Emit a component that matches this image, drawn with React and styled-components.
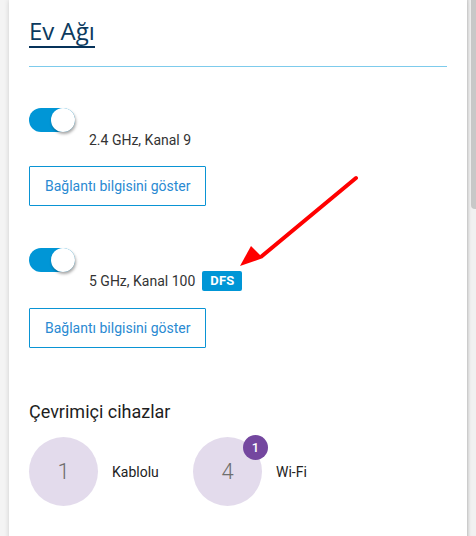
import React from "react";
import styled, { createGlobalStyle } from "styled-components";

const GlobalStyle = createGlobalStyle`
  html, body {
    margin: 0;
    padding: 0;
    height: 100%;
    overflow: hidden;
  }
  body {
    font-family: Roboto, "Liberation Sans", Arial, sans-serif;
    background: #f4f4f4;
  }
`;

const Frame = styled.div`
  display: flex;
  height: 536px;
  overflow: hidden;
  background: #f4f4f4;
`;

const Page = styled.div`
  position: relative;
  flex: 1;
  padding-left: 9px;
`;

const Rail = styled.div`
  flex: none;
  width: 9px;
  background: #f1f1f1;
  box-shadow: inset 3px 0 3px -2px rgba(0, 0, 0, 0.14);
  padding-left: 4px;
  box-sizing: border-box;
`;

const Thumb = styled.div`
  height: 209px;
  background: #c8c8c8;
  border-radius: 0 0 0 4px;
`;

const Card = styled.section`
  background: #fff;
  min-height: 1360px;
  padding: 15px 20px 20px;
  box-shadow: 0 0 5px rgba(0, 0, 0, 0.16);
`;

const Title = styled.h1`
  display: inline-block;
  margin: 0;
  font-family: "Open Sans", Roboto, sans-serif;
  font-weight: 400;
  font-size: 24px;
  line-height: 31px;
  color: #0b3a5e;
  border-bottom: 2px solid #07335a;
`;

const Divider = styled.hr`
  margin: 18px 0 0;
  border: 0;
  height: 1px;
  background: #7dcbec;
`;

const Band = styled.div`
  margin-top: 41px;
  & + & {
    margin-top: 42px;
  }
`;

const Switch = styled.span`
  position: relative;
  display: block;
  width: 46px;
  height: 24px;
  border-radius: 12px;
  background: ${(p) => (p.on ? "#0096d6" : "#bdbdbd")};

  &::after {
    content: "";
    position: absolute;
    top: 0;
    left: ${(p) => (p.on ? "22px" : "0")};
    width: 24px;
    height: 24px;
    border-radius: 50%;
    background: #fff;
    box-shadow: 1px 2px 3px rgba(0, 0, 0, 0.35);
  }
`;

const BandLabel = styled.div`
  display: flex;
  align-items: center;
  gap: 7px;
  margin-top: -1px;
  padding-left: 60px;
  font-size: 14px;
  line-height: 18px;
  color: #333;
`;

const Tag = styled.span`
  display: inline-block;
  padding: 0 8px;
  height: 20px;
  line-height: 20px;
  border-radius: 2px;
  background: #0096d6;
  color: #fff;
  font-weight: 700;
  font-size: 13px;
  letter-spacing: 0.2px;
`;

const OutlineButton = styled.button`
  display: block;
  margin-top: 17px;
  height: 40px;
  padding: 0 15px;
  background: #fff;
  border: 1px solid #0a94d4;
  border-radius: 1px;
  font-family: Roboto, sans-serif;
  font-size: 14px;
  color: #2a8ad2;
  cursor: pointer;
`;

const SectionTitle = styled.h2`
  margin: 52px 0 0;
  font-weight: 400;
  font-size: 18px;
  line-height: 24px;
  color: #1e1e1e;
`;

const Devices = styled.div`
  display: flex;
  margin-top: 13px;
`;

const Device = styled.div`
  display: flex;
  align-items: center;
  gap: 14px;
  width: 164px;
  font-size: 14px;
  color: #222;
`;

const Bubble = styled.div`
  position: relative;
  flex: none;
  width: 69px;
  height: 69px;
  border-radius: 50%;
  background: #e3dbec;
  display: flex;
  align-items: center;
  justify-content: center;
  font-size: 22px;
  font-weight: 300;
  color: #6e6e6e;
`;

const Count = styled.span`
  position: absolute;
  top: -2px;
  right: -6px;
  width: 25px;
  height: 25px;
  border-radius: 50%;
  background: #74479f;
  color: #fff;
  font-size: 13px;
  font-weight: 500;
  display: flex;
  align-items: center;
  justify-content: center;
`;

const Pointer = styled.svg`
  position: absolute;
  left: 240px;
  top: 170px;
  pointer-events: none;
`;

function WifiBand({ label, tag }) {
  return (
    <Band>
      <Switch on />
      <BandLabel>
        {label}
        {tag && <Tag>{tag}</Tag>}
      </BandLabel>
      <OutlineButton>Bağlantı bilgisini göster</OutlineButton>
    </Band>
  );
}

export default function App() {
  return (
    <>
      <GlobalStyle />
      <Frame>
        <Page>
          <Card>
            <Title>Ev Ağı</Title>
            <Divider />
            <WifiBand label="2.4 GHz, Kanal 9" />
            <WifiBand label="5 GHz, Kanal 100" tag="DFS" />
            <SectionTitle>Çevrimiçi cihazlar</SectionTitle>
            <Devices>
              <Device>
                <Bubble>1</Bubble>
                Kablolu
              </Device>
              <Device>
                <Bubble>
                  4<Count>1</Count>
                </Bubble>
                Wi-Fi
              </Device>
            </Devices>
          </Card>
          <Pointer width="130" height="110" viewBox="0 0 130 110">
            <line x1="116" y1="8" x2="22" y2="86" stroke="#ff0000" strokeWidth="4" strokeLinecap="round" />
            <polygon points="0,96 11,76 23,88" fill="#ff0000" />
          </Pointer>
        </Page>
        <Rail>
          <Thumb />
        </Rail>
      </Frame>
    </>
  );
}
